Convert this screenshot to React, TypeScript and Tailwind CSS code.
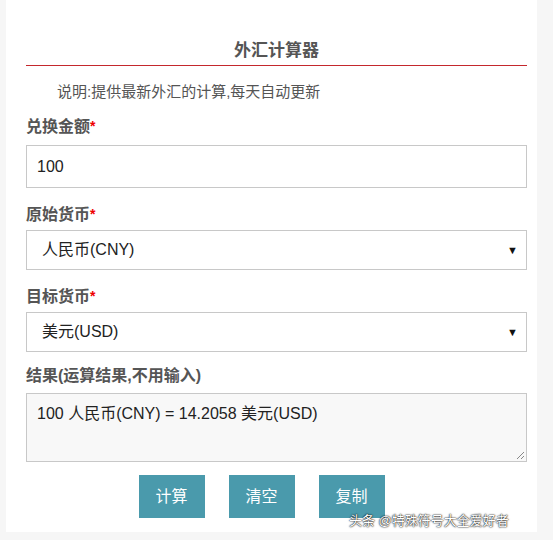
import React from "react";

const font = { fontFamily: '"Liberation Sans", "Noto Sans CJK SC", sans-serif' };

function Label({ text, star }: { text: string; star?: boolean }) {
  return (
    <div className="h-[26px] flex items-center text-[16px] font-bold text-[#555]">
      {text}
      {star && <span className="text-[#e00] text-[14px] self-start mt-[2px]">*</span>}
    </div>
  );
}

function Select({ value }: { value: string }) {
  return (
    <div className="h-[40px] border border-[#c8c8c8] bg-white flex items-center justify-between pl-[15px] pr-[8px] text-[16px] text-[#222]">
      <span>{value}</span>
      <span className="text-[11px] text-[#111]">▼</span>
    </div>
  );
}

export default function App() {
  return (
    <div style={font} className="w-[553px] h-[540px] bg-[#f6f6f6] overflow-hidden">
      <div className="ml-[6px] w-[531px] h-[532px] bg-white pl-[20px] pr-[10px] relative">
        <div className="pt-[38px] text-center text-[17px] font-bold text-[#555] h-[66px] leading-[26px] border-b border-[#c4282d]">外汇计算器</div>
        <div className="pl-[31px] mt-[15px] text-[15px] text-[#555] leading-[22px]">说明:提供最新外汇的计算,每天自动更新</div>
        <div className="mt-[11px]">
          <Label text="兑换金额" star />
        </div>
        <div className="mt-[5px] h-[43px] border border-[#c8c8c8] flex items-center pl-[10px] text-[16px] text-[#222]">100</div>
        <div className="mt-[14px]"><Label text="原始货币" star /></div>
        <div className="mt-[2px]"><Select value="人民币(CNY)" /></div>
        <div className="mt-[14px]"><Label text="目标货币" star /></div>
        <div className="mt-[2px]"><Select value="美元(USD)" /></div>
        <div className="mt-[11px]"><Label text="结果(运算结果,不用输入)" /></div>
        <div className="mt-[4px] h-[69px] border border-[#c8c8c8] bg-[#f8f8f8] pl-[10px] pt-[8px] text-[16px] text-[#222] relative">
          100 人民币(CNY) = 14.2058 美元(USD)
          <svg className="absolute right-[1px] bottom-[1px]" width="9" height="9" viewBox="0 0 9 9">
            <line x1="8" y1="1" x2="1" y2="8" stroke="#888" strokeWidth="1" />
            <line x1="8" y1="5" x2="5" y2="8" stroke="#888" strokeWidth="1" />
          </svg>
        </div>
        <div className="mt-[13px] flex justify-center gap-[24px] pr-[30px]">
          {["计算", "清空", "复制"].map((t) => (
            <div key={t} className="w-[66px] h-[43px] bg-[#4a9aac] text-white text-[16px] flex items-center justify-center">{t}</div>
          ))}
        </div>
        <div
          className="absolute left-[343px] top-[511px] text-[13px] text-white whitespace-nowrap"
          style={{ textShadow: "0 0 2px #000, 0 0 1px #000" }}
        >
          头条 @特殊符号大全爱好者
        </div>
      </div>
    </div>
  );
}
